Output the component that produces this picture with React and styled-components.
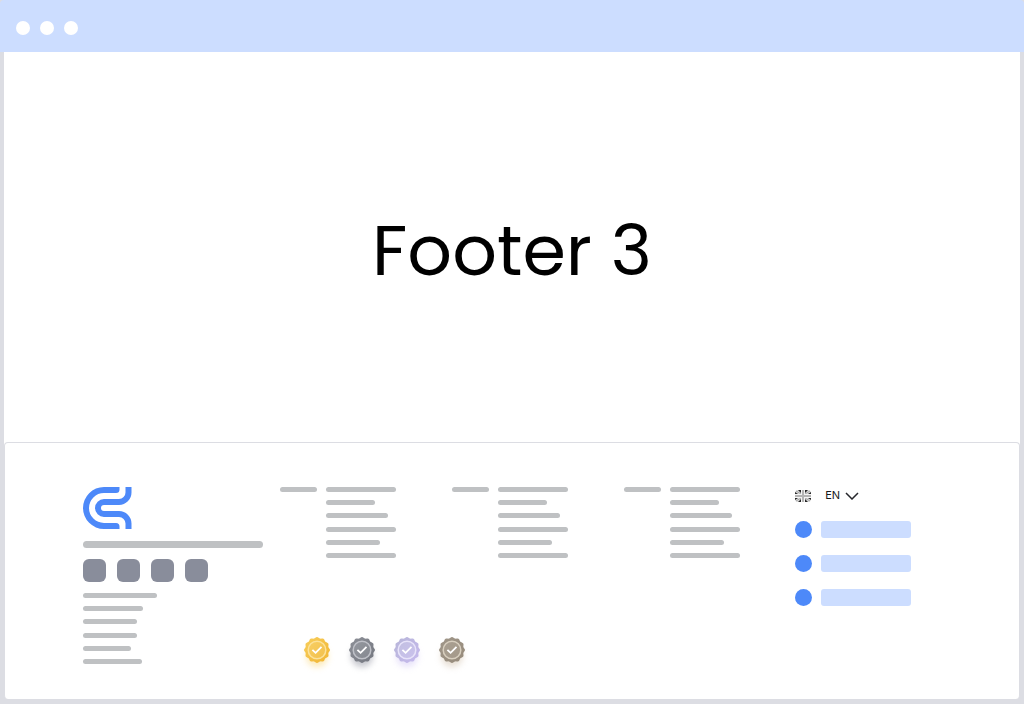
import React from "react";
import styled, { createGlobalStyle } from "styled-components";

const GlobalStyle = createGlobalStyle`
  * { box-sizing: border-box; }
  body {
    margin: 0;
    background: #dcdde3;
    font-family: Poppins, Inter, "Liberation Sans", sans-serif;
    color: #000;
  }
`;

const Browser = styled.div`
  min-height: 100vh;
  display: flex;
  flex-direction: column;
  padding-bottom: 5px;
`;

const TitleBar = styled.header`
  height: 52px;
  padding: 4px 16px 0;
  display: flex;
  align-items: center;
  gap: 10px;
  background: #ccddff;
  border-radius: 4px 4px 0 0;
`;

const WindowDot = styled.span`
  width: 14px;
  height: 14px;
  border-radius: 50%;
  background: #fff;
`;

const Hero = styled.main`
  flex: 1;
  margin: 0 4px;
  padding-top: 8px;
  display: flex;
  align-items: center;
  justify-content: center;
  background: #fff;
`;

const Title = styled.h1`
  margin: 0;
  font-size: 70px;
  line-height: 80px;
  font-weight: 400;
`;

const FooterBack = styled.div`
  padding: 0 4px;
  background: linear-gradient(#fff 4px, #dcdde3 4px);
  background-size: calc(100% - 8px) 100%;
  background-position: center;
  background-repeat: no-repeat;
`;

const Footer = styled.footer`
  display: grid;
  grid-template-columns: 197px repeat(4, 1fr);
  grid-template-rows: auto 1fr;
  padding: 44px 52px 21px 78px;
  background: #fff;
  border: 1px solid #dcdde3;
  border-bottom: 0;
  border-radius: 4px;
`;

const Brand = styled.section`
  grid-row: 1 / 3;
  display: flex;
  flex-direction: column;
  align-items: flex-start;
  padding-bottom: 14px;
`;

const Tagline = styled.div`
  width: 180px;
  height: 7px;
  margin: 12px 0 11px;
  border-radius: 4px;
  background: #bfc1c3;
`;

const Socials = styled.div`
  display: flex;
  gap: 11px;
  margin-bottom: 11px;
`;

const SocialLink = styled.a`
  width: 23px;
  height: 23px;
  border-radius: 6px;
  background: #898d9b;
`;

const Lines = styled.div`
  height: 71px;
  display: flex;
  flex-direction: column;
  justify-content: space-between;
`;

const Line = styled.div`
  width: ${(p) => p.$width}px;
  height: 5px;
  border-radius: 3px;
  background: #bfc1c3;
`;

const Menu = styled.nav`
  display: flex;
  gap: 9px;
`;

const Badges = styled.div`
  grid-column: 2 / 5;
  grid-row: 2;
  align-self: end;
  display: flex;
  gap: 5px;
  padding-left: 17px;
  height: 46px;
`;

const BadgeArt = styled.svg`
  width: 40px;
  height: 46px;
`;

const Contact = styled.section`
  display: flex;
  flex-direction: column;
  gap: 17px;
`;

const Language = styled.label`
  display: flex;
  align-items: center;
  height: 17px;
`;

const LanguageSelect = styled.select`
  appearance: none;
  width: 34px;
  margin: 0 -14px 0 14px;
  padding: 0;
  border: 0;
  background: transparent;
  color: #17181c;
  font-family: Inter, "Liberation Sans", sans-serif;
  font-size: 11px;
  line-height: 17px;
`;

const Chevron = styled.svg`
  pointer-events: none;
`;

const ContactRow = styled.div`
  display: flex;
  gap: 9px;
`;

const ContactDot = styled.span`
  width: 17px;
  height: 17px;
  border-radius: 50%;
  background: #4d89f9;
`;

const ContactBar = styled.span`
  width: 90px;
  height: 17px;
  border-radius: 3px;
  background: #ccddff;
`;

const addressWidths = [74, 60, 54, 54, 48, 59];
const menuWidths = [70, 49, 62, 70, 54, 70];

const badges = [
  { id: "gold", from: "#f8cf5c", to: "#f0b432", ring: "#fce29a", shade: "#f9d778" },
  { id: "steel", from: "#8e9199", to: "#73767f", ring: "#bfc1c8", shade: "#8c8f9c" },
  { id: "violet", from: "#b7b6d8", to: "#c6b9ee", ring: "#e8e4fa", shade: "#d0c6f5" },
  { id: "bronze", from: "#a0978a", to: "#968a7a", ring: "#d8cfbf", shade: "#d0c0aa" },
];

const sealPoints = Array.from({ length: 96 }, (_, i) => {
  const angle = (i / 96) * Math.PI * 2;
  const r = 12.4 + 0.6 * Math.cos(angle * 12);
  return `${(20 + r * Math.sin(angle)).toFixed(2)},${(18 - r * Math.cos(angle)).toFixed(2)}`;
}).join(" ");

function Badge({ id, from, to, ring, shade }) {
  return (
    <BadgeArt viewBox="0 0 40 46" aria-hidden="true">
      <defs>
        <linearGradient id={`${id}-fill`} x1="0" y1="0" x2="1" y2="1">
          <stop offset="0" stopColor={from} />
          <stop offset="1" stopColor={to} />
        </linearGradient>
        <filter id={`${id}-blur`} x="-50%" y="-50%" width="200%" height="200%">
          <feGaussianBlur stdDeviation="3" />
        </filter>
      </defs>
      <circle cx="20" cy="24" r="11" fill={shade} opacity="0.5" filter={`url(#${id}-blur)`} />
      <polygon points={sealPoints} fill={`url(#${id}-fill)`} />
      <circle cx="20" cy="18" r="8.8" fill={ring} fillOpacity="0.2" stroke={ring} strokeWidth="1.5" />
      <path d="M15.400 17.800l3.200 3 5.900-6" fill="none" stroke="#fff" strokeWidth="1.8" />
    </BadgeArt>
  );
}

function Logo() {
  return (
    <svg width="49" height="42" viewBox="0 0 49 42" role="img" aria-label="Logo">
      <path
        d="M36.5 0H21a21 21 0 0 0 0 42h15.500v-2.500a3.500 3.500 0 0 0-3.500-3.500H21a15 15 0 0 1 0-30h12a3.500 3.500 0 0 0 3.500-3.500z"
        fill="#4d89f9"
      />
      <path
        d="M45.500 0v5.500a9.500 9.500 0 0 1-9.500 9.500H21a6 6 0 0 0 0 12h15a9.500 9.500 0 0 1 9.500 9.500V42"
        fill="none"
        stroke="#4d89f9"
        strokeWidth="6"
      />
    </svg>
  );
}

function Flag() {
  return (
    <svg width="16" height="12" viewBox="0 0 16 12" aria-hidden="true">
      <rect width="16" height="12" rx="3" fill="#d8d8d8" />
      <path d="M3 0h3v3zM13 0h-3v3zM3 12h3V9zM13 12h-3V9zM0 2l3 2H0zM16 2l-3 2h3zM0 10l3-2H0zM16 10l-3-2h3z" fill="#292929" />
      <path d="M1 1l5 3M15 1l-5 3M1 11l5-3M15 11l-5-3" stroke="#a8a8a8" strokeWidth="1" />
      <path d="M8 0v12M0 6h16" stroke="#f4f4f4" strokeWidth="4" />
      <path d="M8 0v12M0 6h16" stroke="#b4b4b4" strokeWidth="2" />
    </svg>
  );
}

export default function App() {
  return (
    <>
      <GlobalStyle />
      <Browser>
        <TitleBar>
          <WindowDot />
          <WindowDot />
          <WindowDot />
        </TitleBar>
        <Hero>
          <Title>Footer 3</Title>
        </Hero>
        <FooterBack>
          <Footer>
            <Brand>
              <Logo />
              <Tagline />
              <Socials>
                {[1, 2, 3, 4].map((n) => (
                  <SocialLink key={n} href="#" aria-label={`Social link ${n}`} />
                ))}
              </Socials>
              <Lines>
                {addressWidths.map((width, i) => (
                  <Line key={i} $width={width} />
                ))}
              </Lines>
            </Brand>
            {[1, 2, 3].map((n) => (
              <Menu key={n} aria-label={`Footer menu ${n}`}>
                <Line $width={37} />
                <Lines>
                  {menuWidths.map((width, i) => (
                    <Line key={i} $width={width} />
                  ))}
                </Lines>
              </Menu>
            ))}
            <Contact>
              <Language>
                <Flag />
                <LanguageSelect aria-label="Language" defaultValue="en">
                  <option value="en">EN</option>
                </LanguageSelect>
                <Chevron width="14" height="8" viewBox="0 0 14 8" aria-hidden="true">
                  <path d="M1 1l6 6 6-6" fill="none" stroke="#26272b" strokeWidth="1.5" />
                </Chevron>
              </Language>
              {[1, 2, 3].map((n) => (
                <ContactRow key={n}>
                  <ContactDot />
                  <ContactBar />
                </ContactRow>
              ))}
            </Contact>
            <Badges>
              {badges.map((badge) => (
                <Badge key={badge.id} {...badge} />
              ))}
            </Badges>
          </Footer>
        </FooterBack>
      </Browser>
    </>
  );
}
